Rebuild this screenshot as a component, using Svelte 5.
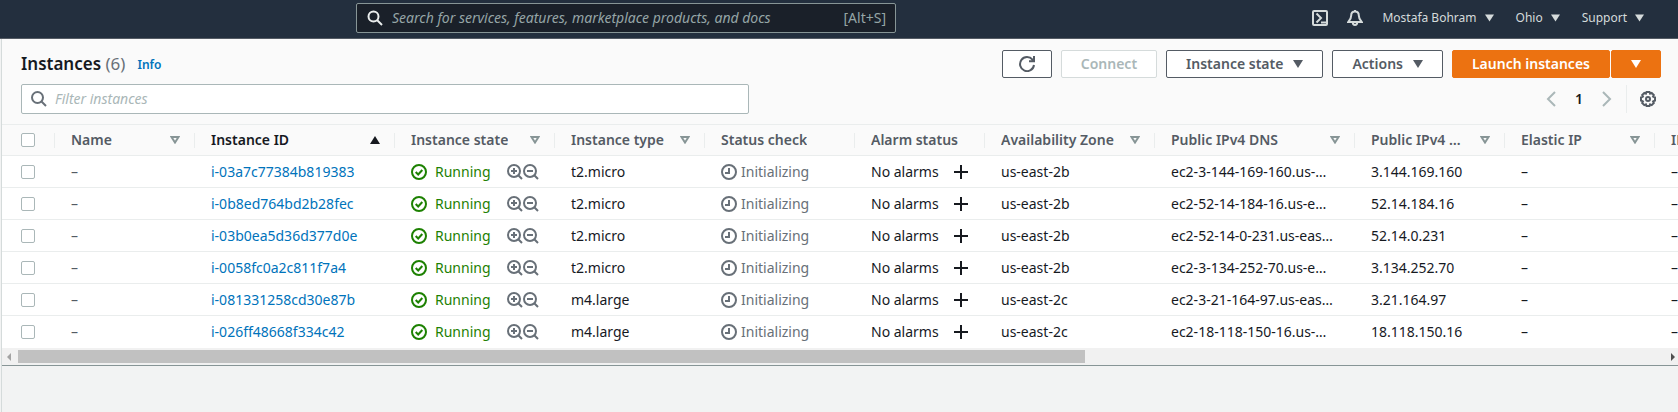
<script>
  const columns = [
    { label: 'Name', width: 140, sort: 'none' },
    { label: 'Instance ID', width: 200, sort: 'asc' },
    { label: 'Instance state', width: 160, sort: 'none' },
    { label: 'Instance type', width: 150, sort: 'none' },
    { label: 'Status check', width: 150 },
    { label: 'Alarm status', width: 130 },
    { label: 'Availability Zone', width: 170, sort: 'none' },
    { label: 'Public IPv4 DNS', width: 200, sort: 'none' },
    { label: 'Public IPv4 …', width: 150, sort: 'none' },
    { label: 'Elastic IP', width: 150, sort: 'none' },
    { label: 'IPv6 IPs', width: 140, sort: 'none' }
  ];

  const rows = [
    { id: 'i-03a7c77384b819383', type: 't2.micro', zone: 'us-east-2b', dns: 'ec2-3-144-169-160.us-…', ip: '3.144.169.160' },
    { id: 'i-0b8ed764bd2b28fec', type: 't2.micro', zone: 'us-east-2b', dns: 'ec2-52-14-184-16.us-e…', ip: '52.14.184.16' },
    { id: 'i-03b0ea5d36d377d0e', type: 't2.micro', zone: 'us-east-2b', dns: 'ec2-52-14-0-231.us-eas…', ip: '52.14.0.231' },
    { id: 'i-0058fc0a2c811f7a4', type: 't2.micro', zone: 'us-east-2b', dns: 'ec2-3-134-252-70.us-e…', ip: '3.134.252.70' },
    { id: 'i-081331258cd30e87b', type: 'm4.large', zone: 'us-east-2c', dns: 'ec2-3-21-164-97.us-eas…', ip: '3.21.164.97' },
    { id: 'i-026ff48668f334c42', type: 'm4.large', zone: 'us-east-2c', dns: 'ec2-18-118-150-16.us-…', ip: '18.118.150.16' }
  ];
</script>

{#snippet caret()}
  <svg class="caret" viewBox="0 0 10 8" aria-hidden="true"><path d="M0 0h10L5 8z" /></svg>
{/snippet}

{#snippet lens(sign)}
  <svg class="icon" viewBox="0 0 16 16" aria-hidden="true">
    <circle cx="7" cy="7" r="6" />
    <path d="M11.3 11.3L15 15M4 7h6" />
    {#if sign === 'in'}<path d="M7 4v6" />{/if}
  </svg>
{/snippet}

<header class="topbar">
  <label class="search">
    <svg class="icon" viewBox="0 0 16 16" aria-hidden="true"><circle cx="6.5" cy="6.5" r="5" /><path d="M10 10l5 5" /></svg>
    <input type="search" aria-label="Search" placeholder="Search for services, features, marketplace products, and docs" />
    <span>[Alt+S]</span>
  </label>
  <nav>
    <button class="tool" aria-label="CloudShell">
      <svg class="icon" viewBox="0 0 16 16"><rect x="1" y="1" width="14" height="14" rx="1" /><path d="M4.5 3.5L9 8l-4.500 4.500M9 12.500h5" /></svg>
    </button>
    <button class="tool" aria-label="Notifications">
      <svg class="icon" viewBox="0 0 16 16"><path d="M8 1.500C5.500 1.500 4.200 3.300 4.200 5.500c0 3-1 4.500-2.900 6.500h13.400c-1.900-2-2.900-3.500-2.900-6.500 0-2.200-1.300-4-3.800-4zM8 0v2M5.800 12.500c0 3.300 4.400 3.300 4.400 0" /></svg>
    </button>
    <button>Mostafa Bohram {@render caret()}</button>
    <button>Ohio {@render caret()}</button>
    <button>Support {@render caret()}</button>
  </nav>
</header>

<main>
  <section class="panel">
    <div class="heading">
      <h1>Instances <span>(6)</span></h1>
      <a class="info" href="#info">Info</a>
      <div class="actions">
        <button class="btn square" aria-label="Refresh">
          <svg class="icon" viewBox="0 0 16 16"><path d="M15 9A7 7 0 1 1 13.500 3.700L15 5.200M15 0v5.200H10" /></svg>
        </button>
        <button class="btn" disabled>Connect</button>
        <button class="btn">Instance state {@render caret()}</button>
        <button class="btn">Actions {@render caret()}</button>
        <div class="split">
          <button class="btn primary">Launch instances</button>
          <button class="btn primary square" aria-label="More launch options">{@render caret()}</button>
        </div>
      </div>
    </div>

    <div class="filters">
      <label class="filter">
        <svg class="icon" viewBox="0 0 16 16" aria-hidden="true"><circle cx="6.500" cy="6.500" r="5.500" /><path d="M10.500 10.500L15 15" /></svg>
        <input type="text" aria-label="Filter instances" placeholder="Filter instances" />
      </label>
      <div class="pager">
        <button aria-label="Previous page"><svg class="chevron" viewBox="0 0 10 16"><path d="M9 1L2 8l7 7" /></svg></button>
        <b>1</b>
        <button aria-label="Next page"><svg class="chevron" viewBox="0 0 10 16"><path d="M1 1l7 7-7 7" /></svg></button>
        <button class="gear" aria-label="Preferences">
          <svg class="icon" viewBox="0 0 16 16">
            <path d="M6.500 1h3l.600 1.600 1.600-.700 2.100 2.100-.700 1.600 1.900.900v3l-1.900.900.700 1.600-2.100 2.100-1.600-.700-.600 1.600h-3l-.600-1.600-1.600.700-2.100-2.100.700-1.600L1 9.500v-3l1.900-.900-.700-1.600 2.100-2.100 1.600.700z" />
            <circle cx="8" cy="8" r="2" />
          </svg>
        </button>
      </div>
    </div>

    <div class="viewport">
      <table>
        <colgroup>
          <col style="width: 53px" />
          {#each columns as column}<col style="width: {column.width}px" />{/each}
        </colgroup>
        <thead>
          <tr>
            <th class="pick"><div class="head"><input type="checkbox" aria-label="Select all instances" /></div></th>
            {#each columns as column}
              <th class:sorted={column.sort === 'asc'}>
                <div class="head">
                  <span>{column.label}</span>
                  {#if column.sort === 'asc'}
                    <svg class="sort" viewBox="0 0 10 8"><path d="M5 0l5 8H0z" fill="currentColor" /></svg>
                  {:else if column.sort}
                    <svg class="sort" viewBox="0 0 10 8"><path d="M1.500 1h7L5 6.500z" fill="none" stroke="#879596" stroke-width="2" /></svg>
                  {/if}
                </div>
              </th>
            {/each}
          </tr>
        </thead>
        <tbody>
          {#each rows as row}
            <tr>
              <td class="pick"><input type="checkbox" aria-label="Select {row.id}" /></td>
              <td class="muted">–</td>
              <td><a href="#{row.id}">{row.id}</a></td>
              <td>
                <div class="state">
                  <span class="running">
                    <svg class="icon" viewBox="0 0 16 16" aria-hidden="true"><circle cx="8" cy="8" r="7" /><path d="M4.700 8l2.500 2.500 4.100-4.500" /></svg>
                    Running
                  </span>
                  <span class="zoom">
                    <button aria-label="Show only running">{@render lens('in')}</button>
                    <button aria-label="Hide running">{@render lens('out')}</button>
                  </span>
                </div>
              </td>
              <td>{row.type}</td>
              <td>
                <span class="check">
                  <svg class="icon" viewBox="0 0 16 16" aria-hidden="true"><circle cx="8" cy="8" r="7" /><path d="M8 4v5H4" /></svg>
                  Initializing
                </span>
              </td>
              <td>
                <div class="alarm">
                  No alarms
                  <button aria-label="Add alarm"><svg class="icon" viewBox="0 0 16 16"><path d="M8 1v14M1 8h14" /></svg></button>
                </div>
              </td>
              <td>{row.zone}</td>
              <td>{row.dns}</td>
              <td>{row.ip}</td>
              <td>–</td>
              <td>–</td>
            </tr>
          {/each}
        </tbody>
      </table>
    </div>

    <div class="scrollbar" aria-hidden="true">
      <svg viewBox="0 0 4 8"><path d="M4 0v8L0 4z" fill="#a3a3a3" /></svg>
      <div class="track"><div class="thumb"></div></div>
      <svg viewBox="0 0 4 8"><path d="M0 0v8l4-4z" fill="#505050" /></svg>
    </div>
  </section>
</main>

<style>
  :global(body) {
    margin: 0;
    background: #f2f3f3;
    overflow: hidden;
  }
  :global(#app) {
    display: flex;
    flex-direction: column;
    min-height: 100vh;
    font: 14px/20px 'Noto Sans', 'Open Sans', sans-serif;
    color: #16191f;
  }
  * {
    box-sizing: border-box;
  }
  button,
  input {
    margin: 0;
    padding: 0;
    border: 0;
    background: none;
    font: inherit;
    color: inherit;
  }
  button {
    display: flex;
    align-items: center;
    justify-content: center;
  }
  svg {
    display: block;
    flex: none;
  }
  .icon {
    width: 16px;
    height: 16px;
    fill: none;
    stroke: currentColor;
    stroke-width: 2;
  }
  .caret {
    width: 10px;
    height: 8px;
    fill: currentColor;
  }
  a {
    color: #0073bb;
    text-decoration: none;
  }

  .topbar {
    display: flex;
    align-items: flex-start;
    justify-content: space-between;
    height: 39px;
    padding: 3px 34px 0 356px;
    background: #232f3e;
    border-bottom: 1px solid #545b64;
    color: #d5dbdb;
  }
  .search {
    display: flex;
    align-items: center;
    gap: 9px;
    width: 540px;
    height: 30px;
    padding: 0 9px 0 10px;
    background: #1a2029;
    border: 1px solid #879596;
    border-radius: 2px;
    color: #95a5a6;
  }
  .search .icon {
    color: #eaeded;
  }
  .search input {
    flex: 1;
    min-width: 0;
  }
  input::placeholder {
    color: #95a5a6;
    font-style: italic;
    opacity: 1;
  }
  nav {
    display: flex;
    align-items: center;
    gap: 22px;
    height: 30px;
    font-size: 12px;
  }
  nav button {
    gap: 8px;
  }
  nav .tool {
    margin-right: -3px;
  }
  nav .caret {
    width: 9px;
  }

  main {
    flex: 1;
    margin-left: 1px;
    border-left: 1px solid #d5dbdb;
  }
  .panel {
    background: #fafafa;
    border-bottom: 1px solid #879596;
  }
  .heading {
    display: flex;
    align-items: center;
    padding: 11px 17px 6px 19px;
  }
  h1 {
    margin: 0;
    font-size: 17px;
    line-height: 24px;
    font-weight: 600;
  }
  h1 span {
    font-weight: 400;
    color: #687078;
  }
  .info {
    margin: 2px 0 0 12px;
    font-size: 12px;
    font-weight: 600;
  }
  .actions {
    display: flex;
    gap: 9px;
    margin-left: auto;
  }
  .btn {
    gap: 10px;
    height: 28px;
    padding: 0 19px;
    background: #fff;
    border: 1px solid #545b64;
    border-radius: 2px;
    font-weight: 600;
    color: #545b64;
  }
  .btn:disabled {
    border-color: #d5dbdb;
    color: #aab7b8;
  }
  .square {
    width: 50px;
    padding: 0;
  }
  .split {
    display: flex;
    gap: 1px;
  }
  .primary {
    background: #ec7211;
    border-color: #ec7211;
    color: #fff;
  }
  .filters {
    display: flex;
    align-items: center;
    justify-content: space-between;
    padding: 0 22px 10px 19px;
  }
  .filter {
    display: flex;
    align-items: center;
    gap: 8px;
    flex: 0 1 728px;
    height: 30px;
    padding: 0 9px;
    background: #fff;
    border: 1px solid #aab7b8;
    border-radius: 2px;
    color: #687078;
  }
  .filter input {
    flex: 1;
  }
  .filter input::placeholder {
    color: #aab7b8;
  }
  .pager {
    display: flex;
    align-items: center;
  }
  .pager b {
    width: 46px;
    text-align: center;
    font-weight: 600;
  }
  .chevron {
    width: 10px;
    height: 16px;
    fill: none;
    stroke: #aab7b8;
    stroke-width: 2;
  }
  .gear {
    height: 28px;
    margin-left: 14px;
    padding-left: 13px;
    border-left: 1px solid #eaeded;
    color: #545b64;
  }

  .viewport {
    overflow: hidden;
    border-top: 1px solid #eaeded;
  }
  table {
    width: 100%;
    table-layout: fixed;
    border-collapse: separate;
    border-spacing: 0;
  }
  th,
  td {
    height: 32px;
    padding: 0 0 0 16px;
    text-align: left;
    white-space: nowrap;
    vertical-align: middle;
  }
  th {
    height: 31px;
    border-bottom: 1px solid #eaeded;
    font-weight: 600;
    color: #545b64;
  }
  .sorted {
    color: #16191f;
  }
  .pick {
    padding-left: 19px;
  }
  .head {
    display: flex;
    align-items: center;
    justify-content: space-between;
    gap: 8px;
    height: 15px;
    padding-right: 14px;
    border-right: 1px solid #eaeded;
  }
  .head span {
    overflow: hidden;
    text-overflow: ellipsis;
  }
  .sort {
    width: 10px;
    height: 8px;
  }
  td {
    background: #fff;
    border-bottom: 1px solid #eaeded;
  }
  tbody tr:last-child td {
    border-bottom-color: #fff;
  }
  .muted {
    color: #545b64;
  }
  input[type='checkbox'] {
    display: block;
    flex: none;
    appearance: none;
    width: 14px;
    height: 14px;
    background: #fff;
    border: 1px solid #aab7b8;
    border-radius: 2px;
  }
  .state,
  .running,
  .zoom,
  .check,
  .alarm {
    display: flex;
    align-items: center;
  }
  .state {
    justify-content: space-between;
    padding-right: 16px;
  }
  .running {
    gap: 8px;
    color: #1d8102;
  }
  .zoom {
    color: #687078;
  }
  .check {
    gap: 4px;
    color: #687078;
  }
  .alarm {
    justify-content: space-between;
    padding-right: 16px;
  }

  .scrollbar {
    display: flex;
    align-items: center;
    gap: 12px;
    height: 17px;
    padding: 0 3px 0 5px;
    background: #f1f1f1;
  }
  .scrollbar svg {
    width: 4px;
    height: 8px;
  }
  .track {
    flex: 1;
    margin-left: -5px;
  }
  .thumb {
    width: 65%;
    height: 13px;
    background: #c1c1c1;
  }
</style>
